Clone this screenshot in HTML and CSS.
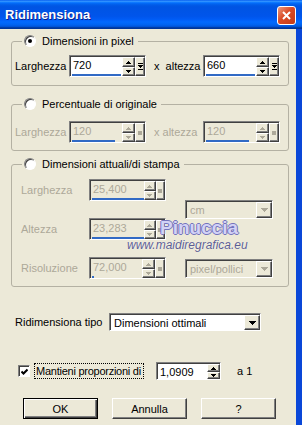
FILE: index.html
```html
<!DOCTYPE html>
<html lang="it">

<head>
    <meta charset="UTF-8">
    <title>Ridimensiona</title>
    <link rel="stylesheet" href="styles.css">
</head>

<body>
    <div class="window">
        <div class="titlebar">
            <span class="title">Ridimensiona</span>
            <span class="close">
                <svg width="11" height="11"><path d="M2 2l7 7M9 2l-7 7" stroke="#fff" stroke-width="2"/></svg>
            </span>
        </div>

        <div class="client">
            <!-- Dimensioni in pixel -->
            <fieldset class="group g1">
                <legend><span class="radio checked"></span>Dimensioni in pixel</legend>
                <div class="row">
                    <span class="lbl">Larghezza</span>
                    <div class="spin">
                        <div class="field">720<i class="bar" style="width:49px"></i></div>
                        <div class="arrows">
                            <span class="sb"><svg width="5" height="3"><path d="M2 0h1v1h1v1h1v1H0V2h1V1h1z"/></svg></span>
                            <span class="sb"><svg width="5" height="3"><path d="M0 0h5v1H4v1H3v1H2V2H1V1H0z"/></svg></span>
                        </div>
                        <span class="fine"><svg width="5" height="7"><path d="M0 0h5v1H0zM0 2h5v1H4v1H3v1H2V4H1V3H0zM0 6h5v1H0z"/></svg></span>
                    </div>
                    <span class="times">x&nbsp; altezza</span>
                    <div class="spin">
                        <div class="field">660<i class="bar" style="width:49px"></i></div>
                        <div class="arrows">
                            <span class="sb"><svg width="5" height="3"><path d="M2 0h1v1h1v1h1v1H0V2h1V1h1z"/></svg></span>
                            <span class="sb"><svg width="5" height="3"><path d="M0 0h5v1H4v1H3v1H2V2H1V1H0z"/></svg></span>
                        </div>
                        <span class="fine"><svg width="5" height="7"><path d="M0 0h5v1H0zM0 2h5v1H4v1H3v1H2V4H1V3H0zM0 6h5v1H0z"/></svg></span>
                    </div>
                </div>
            </fieldset>

            <!-- Percentuale di originale -->
            <fieldset class="group g2">
                <legend><span class="radio"></span>Percentuale di originale</legend>
                <div class="row off">
                    <span class="lbl">Larghezza</span>
                    <div class="spin">
                        <div class="field">120<i class="bar" style="width:43px"></i></div>
                        <div class="arrows">
                            <span class="sb"><svg width="5" height="3"><path d="M2 0h1v1h1v1h1v1H0V2h1V1h1z"/></svg></span>
                            <span class="sb"><svg width="5" height="3"><path d="M0 0h5v1H4v1H3v1H2V2H1V1H0z"/></svg></span>
                        </div>
                        <span class="fine"><i class="dot"></i></span>
                    </div>
                    <span class="times">x altezza</span>
                    <div class="spin">
                        <div class="field">120<i class="bar" style="width:43px"></i></div>
                        <div class="arrows">
                            <span class="sb"><svg width="5" height="3"><path d="M2 0h1v1h1v1h1v1H0V2h1V1h1z"/></svg></span>
                            <span class="sb"><svg width="5" height="3"><path d="M0 0h5v1H4v1H3v1H2V2H1V1H0z"/></svg></span>
                        </div>
                        <span class="fine"><i class="dot"></i></span>
                    </div>
                </div>
            </fieldset>

            <!-- Dimensioni attuali/di stampa -->
            <fieldset class="group g3">
                <legend><span class="radio"></span>Dimensioni attuali/di stampa</legend>
                <div class="print off">
                    <span class="lbl">Larghezza</span>
                    <div class="spin">
                        <div class="field">25,400<i class="bar" style="width:52px"></i></div>
                        <div class="arrows">
                            <span class="sb"><svg width="5" height="3"><path d="M2 0h1v1h1v1h1v1H0V2h1V1h1z"/></svg></span>
                            <span class="sb"><svg width="5" height="3"><path d="M0 0h5v1H4v1H3v1H2V2H1V1H0z"/></svg></span>
                        </div>
                        <span class="fine"><i class="dot"></i></span>
                    </div>
                    <div class="combo unit">
                        <span class="val">cm</span>
                        <span class="drop"><svg width="7" height="4"><path d="M0 0h7v1H6v1H5v1H4v1H3V3H2V2H1V1H0z"/></svg></span>
                    </div>

                    <span class="lbl">Altezza</span>
                    <div class="spin">
                        <div class="field">23,283<i class="bar" style="width:52px"></i></div>
                        <div class="arrows">
                            <span class="sb"><svg width="5" height="3"><path d="M2 0h1v1h1v1h1v1H0V2h1V1h1z"/></svg></span>
                            <span class="sb"><svg width="5" height="3"><path d="M0 0h5v1H4v1H3v1H2V2H1V1H0z"/></svg></span>
                        </div>
                        <span class="fine"><i class="dot"></i></span>
                    </div>

                    <span class="lbl">Risoluzione</span>
                    <div class="spin">
                        <div class="field">72,000<i class="bar" style="width:2px"></i></div>
                        <div class="arrows">
                            <span class="sb"><svg width="5" height="3"><path d="M2 0h1v1h1v1h1v1H0V2h1V1h1z"/></svg></span>
                            <span class="sb"><svg width="5" height="3"><path d="M0 0h5v1H4v1H3v1H2V2H1V1H0z"/></svg></span>
                        </div>
                        <span class="fine"><i class="dot"></i></span>
                    </div>
                    <div class="combo">
                        <span class="val">pixel/pollici</span>
                        <span class="drop"><svg width="7" height="4"><path d="M0 0h7v1H6v1H5v1H4v1H3V3H2V2H1V1H0z"/></svg></span>
                    </div>
                </div>
            </fieldset>

            <div class="type-row">
                <span class="lbl">Ridimensiona tipo</span>
                <div class="combo wide">
                    <span class="val">Dimensioni ottimali</span>
                    <span class="drop"><svg width="7" height="4"><path d="M0 0h7v1H6v1H5v1H4v1H3V3H2V2H1V1H0z"/></svg></span>
                </div>
            </div>

            <div class="check-row">
                <span class="check">
                    <svg width="7" height="7"><path d="M0.5 3.5l2 2 4-4" fill="none" stroke="#000" stroke-width="2"/></svg>
                </span>
                <span class="focus">Mantieni proporzioni di</span>
                <div class="spin small">
                    <div class="field">1,0909</div>
                    <div class="arrows">
                        <span class="sb"><svg width="5" height="3"><path d="M2 0h1v1h1v1h1v1H0V2h1V1h1z"/></svg></span>
                        <span class="sb"><svg width="5" height="3"><path d="M0 0h5v1H4v1H3v1H2V2H1V1H0z"/></svg></span>
                    </div>
                </div>
                <span class="ratio">a 1</span>
            </div>

            <div class="buttons">
                <span class="btn default">OK</span>
                <span class="btn">Annulla</span>
                <span class="btn">?</span>
            </div>
        </div>

        <div class="watermark">
            <span class="wm-name">Pinuccia</span>
            <span class="wm-site">www.maidiregrafica.eu</span>
        </div>
    </div>
</body>

</html>
```

FILE: styles.css
```css
body {
    margin: 0;
    font-family: 'Liberation Sans', Arial, sans-serif;
    font-size: 11px;
    color: #000;
    background-color: #ECE9D8;
}

.window {
    position: relative;
    width: 302px;
    height: 425px;
    display: flex;
    flex-direction: column;
    overflow: hidden;
}

/* Barra del titolo stile XP */
.titlebar {
    height: 29px;
    flex: none;
    display: flex;
    align-items: center;
    justify-content: space-between;
    padding: 0 6px 0 5px;
    background: linear-gradient(to bottom, #0058EE 0%, #3593FF 4%, #288EFF 6%, #127DFF 8%, #036FFC 10%, #0262EE 14%, #0057E5 20%, #0054E3 24%, #0055EB 56%, #005BF5 66%, #026AFE 76%, #0062EF 86%, #0052D6 92%, #0040AB 94%, #003092 100%);
}

.title {
    color: #fff;
    font-weight: bold;
    font-size: 13px;
    text-shadow: 1px 1px #0A1E8C;
}

.close {
    width: 19px;
    height: 19px;
    box-sizing: border-box;
    margin-top: 2px;
    border: 1px solid #fff;
    border-radius: 3px;
    background: linear-gradient(135deg, #EC9A80, #DA4A25 45%, #C43B17);
    display: flex;
    align-items: center;
    justify-content: center;
}

.client {
    flex: 1;
    padding: 5px 0 0 11px;
    border-right: 6px solid #0A47D8;
    background-color: #ECE9D8;
}

/* Gruppi */
.group {
    margin: 0;
    width: 278px;
    box-sizing: border-box;
    min-inline-size: 0;
    border: 1px solid #B4B1A3;
    border-radius: 3px;
    padding: 7px 8px 7px 3px;
}

.group legend {
    display: flex;
    align-items: center;
    height: 14px;
    margin-left: 7px;
    padding: 0 4px 0 2px;
}

.g1 {
    padding-bottom: 8px;
}

.g2 {
    margin-top: 11px;
    padding-top: 10px;
}

.g3 {
    margin-top: 6px;
    padding: 8px 8px 7px 9px;
}

.g3 legend {
    margin-left: 1px;
}

.radio {
    width: 12px;
    height: 12px;
    box-sizing: border-box;
    margin-right: 6px;
    border-radius: 50%;
    border: 1px solid;
    border-color: #808080 #fff #fff #808080;
    box-shadow: inset 1px 1px #404040;
    background-color: #fff;
    display: grid;
    place-items: center;
}

.radio.checked::after {
    content: '';
    width: 4px;
    height: 4px;
    border-radius: 50%;
    background-color: #000;
}

.row {
    display: flex;
    align-items: center;
    height: 22px;
}

.row .lbl {
    width: 54px;
}

.times {
    margin-left: 8px;
}

.row .spin:last-child {
    margin-left: auto;
}

.off {
    color: #ACA899;
}

/* Campo numerico con frecce */
.spin {
    display: flex;
    width: 77px;
    height: 22px;
    box-sizing: border-box;
    border: 1px solid;
    border-color: #808080 #fff #fff #808080;
    padding: 1px 0 0 1px;
    background-color: #404040;
}

.field {
    flex: 1;
    display: flex;
    flex-direction: column;
    padding: 1px 0 0 2px;
    line-height: 14px;
    background-color: #fff;
}

.off .field {
    background-color: #ECE9D8;
}

.bar {
    display: block;
    margin-top: auto;
    margin-left: -1px;
    height: 2px;
    background-color: #316AC5;
}

.arrows {
    width: 13px;
    display: flex;
    flex-direction: column;
}

.sb,
.fine,
.drop,
.btn {
    box-sizing: border-box;
    background-color: #ECE9D8;
    border: 1px solid;
    border-color: #fff #404040 #404040 #fff;
    box-shadow: inset -1px -1px #808080;
    display: flex;
    align-items: center;
    justify-content: center;
}

.sb {
    flex: 1;
}

.sb:first-child {
    flex: none;
    height: 10px;
}

.fine {
    width: 10px;
}

.off svg {
    fill: #ACA899;
}

.dot {
    width: 4px;
    height: 4px;
    background-color: #ACA899;
}

/* Dimensioni di stampa */
.print {
    display: grid;
    grid-template-columns: 68px 96px 88px;
    grid-template-rows: 22px 22px 22px;
    row-gap: 17px;
    align-items: center;
}

.print .lbl {
    grid-column: 1;
}

.unit {
    grid-column: 3;
    grid-row: 1 / 3;
}

/* Combo */
.combo {
    display: flex;
    height: 19px;
    box-sizing: border-box;
    border: 1px solid;
    border-color: #808080 #fff #fff #808080;
    padding: 1px 0 0 1px;
    background-color: #404040;
}

.combo .val {
    flex: 1;
    padding-left: 3px;
    line-height: 16px;
    background-color: #fff;
}

.off .combo .val {
    background-color: #ECE9D8;
}

.drop {
    width: 16px;
}

.type-row {
    display: flex;
    align-items: center;
    margin-top: 26px;
    padding-left: 4px;
}

.type-row .lbl {
    width: 94px;
}

.combo.wide {
    width: 152px;
    height: 18px;
}

/* Mantieni proporzioni */
.check-row {
    display: flex;
    align-items: center;
    height: 18px;
    margin-top: 31px;
    padding-left: 7px;
}

.check {
    width: 12px;
    height: 12px;
    box-sizing: border-box;
    border: 1px solid;
    border-color: #808080 #fff #fff #808080;
    box-shadow: inset 1px 1px #404040;
    background-color: #fff;
    display: flex;
    align-items: center;
    justify-content: center;
    padding: 1px 0 0 1px;
}

.focus {
    width: 108px;
    margin-left: 5px;
    padding: 1px 0 1px 1px;
    box-sizing: border-box;
    outline: 1px dotted #000;
    letter-spacing: -0.25px;
    white-space: nowrap;
    overflow: hidden;
}

.spin.small {
    width: 65px;
    height: 18px;
    margin-left: 13px;
}

.spin.small .field {
    padding-left: 2px;
}

.spin.small .sb:first-child {
    height: 8px;
}

.ratio {
    margin-left: 16px;
}

/* Pulsanti */
.buttons {
    display: flex;
    gap: 14px;
    margin-top: 18px;
    padding-left: 12px;
}

.btn {
    width: 75px;
    height: 21px;
}

.btn.default {
    border-color: #000;
    box-shadow: inset 1px 1px #fff, inset -1px -1px #404040, inset -2px -2px #808080;
}

/* Filigrana sopra il dialogo */
.watermark {
    position: absolute;
    left: 127px;
    top: 218px;
    display: flex;
    flex-direction: column;
}

.wm-name {
    padding-left: 33px;
    font-size: 19px;
    line-height: 20px;
    font-weight: bold;
    color: #D2D2F6;
    text-shadow: -1px 0 #7474BC, 1px 0 #7474BC, 0 -1px #7474BC, 0 1px #7474BC;
}

.wm-site {
    font-size: 12px;
    line-height: 14px;
    font-style: italic;
    color: #5E5E92;
    text-shadow: 0 0 1px #fff;
}
```
